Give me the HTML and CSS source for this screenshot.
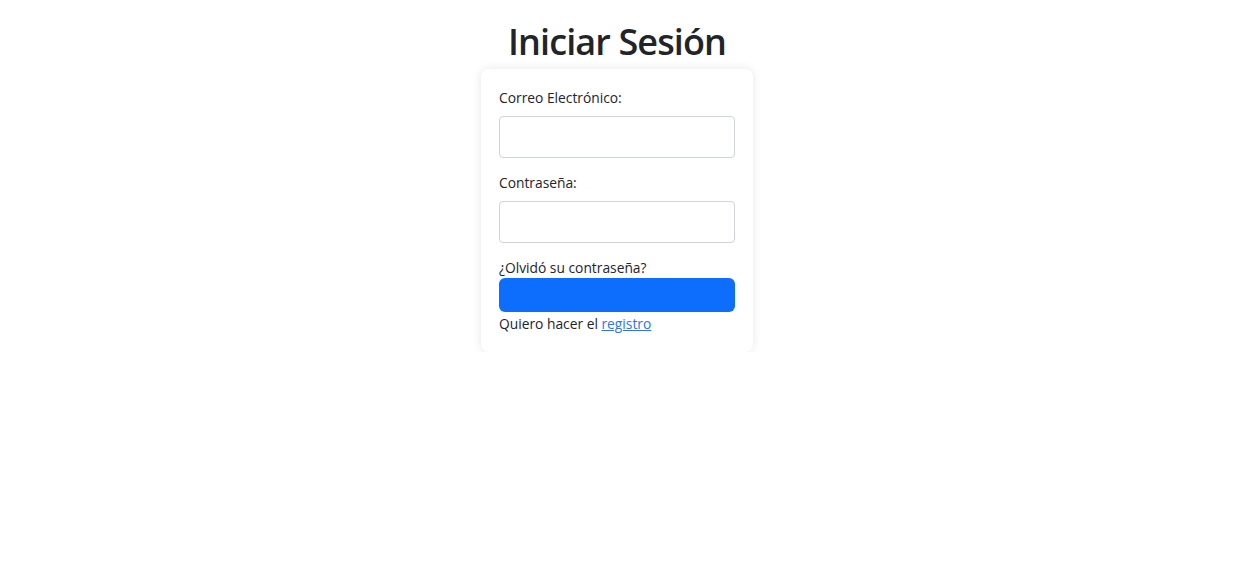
FILE: index.html
```html
<!DOCTYPE html>
<html lang="es">
<head>
<meta charset="utf-8">
<title>Iniciar Sesión</title>
<link rel="stylesheet" href="styles.css">
</head>
<body>
<main class="page">
  <h1 class="title">Iniciar Sesión</h1>
  <form class="card">
    <label class="label" for="email">Correo Electrónico:</label>
    <input class="input" id="email" type="email">
    <label class="label label-gap" for="pass">Contraseña:</label>
    <input class="input" id="pass" type="password">
    <div class="forgot">¿Olvidó su contraseña?</div>
    <button class="btn" type="button"></button>
    <p class="register">Quiero hacer el <a href="#" class="link">registro</a></p>
  </form>
</main>
</body>
</html>
```
FILE: styles.css
```css
* { box-sizing: border-box; }
html, body { margin: 0; padding: 0; background: #fff; }
body {
  font-family: "Open Sans", "Noto Sans", "Liberation Sans", sans-serif;
  color: #212529;
  font-size: 13.8px;
  line-height: 21px;
}
.page {
  display: flex;
  flex-direction: column;
  align-items: center;
  padding-top: 19px;
}
.title {
  margin: 0 0 5px;
  font-size: 36px;
  line-height: 45px;
  font-weight: 600;
  letter-spacing: -0.9px;
}
.card {
  width: 272px;
  padding: 18px 18px 18px;
  border-radius: 8px;
  background: #fff;
  box-shadow: 0 0 10px rgba(0,0,0,0.1);
  display: flex;
  flex-direction: column;
}
.label { display: block; margin-bottom: 8px; }
.label-gap { margin-top: 14px; }
.input {
  width: 100%;
  height: 42px;
  border: 1px solid #ced4da;
  border-radius: 4px;
  padding: 6px 12px;
  font: inherit;
}
.forgot { margin-top: 14px; }
.btn {
  width: 100%;
  height: 34px;
  border: 0;
  border-radius: 6px;
  background: #0d6efd;
  margin-bottom: 1px;
}
.register { margin: 0; }
.link { color: #2f74e8; text-decoration: underline; }
```
